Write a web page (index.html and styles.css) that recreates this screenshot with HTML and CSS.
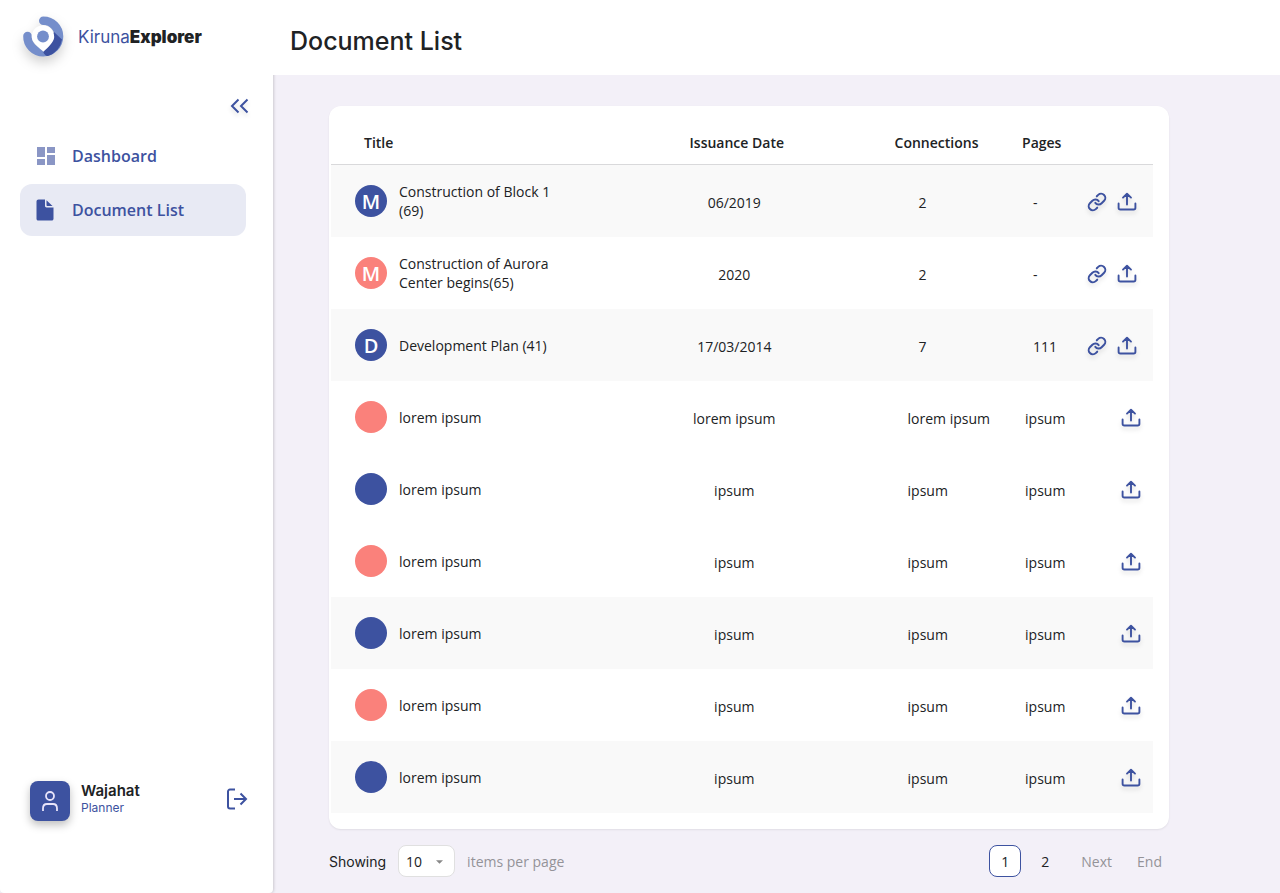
FILE: index.html
```html
<!DOCTYPE html>
<html lang="en">
<head>
<meta charset="utf-8">
<meta name="viewport" content="width=device-width, initial-scale=1">
<title>Document List - KirunaExplorer</title>
<link rel="stylesheet" href="styles.css">
</head>
<body>
<svg class="sprite" aria-hidden="true">
  <symbol id="upload" viewBox="0 0 20 20"><path d="M10 12.500V2M6 5.600 10 1.800l4 3.800M1.600 11.500v4.200c0 1.100.7 1.800 1.800 1.800h13.200c1.100 0 1.800-.7 1.800-1.800v-4.200" fill="none" stroke="currentColor" stroke-width="1.900" stroke-linecap="round" stroke-linejoin="round"/></symbol>
  <symbol id="link" viewBox="0 0 24 24"><path d="M10 13a5 5 0 0 0 7.540.54l3-3a5 5 0 0 0-7.070-7.070l-1.720 1.710M14 11a5 5 0 0 0-7.540-.54l-3 3a5 5 0 0 0 7.070 7.070l1.710-1.710" fill="none" stroke="currentColor" stroke-width="2.400" stroke-linecap="round" stroke-linejoin="round"/></symbol>
</svg>
<div class="app">
  <aside class="sidebar">
    <div class="brand">
      <svg class="brand-mark" viewBox="0 0 40 40" aria-hidden="true">
        <path d="M4.500 19.500a15.800 15.800 0 0 0 15.800 16.200A15.800 15.800 0 0 0 36 20 15.700 15.700 0 0 0 20.300 4.300" fill="none" stroke="#758ecb" stroke-width="8.600" stroke-linecap="round"/>
        <path d="M31 15.500 39 23A20 20 0 0 1 25 39.400Q22 40 20 35Z" fill="#3d52a0"/>
        <path d="M8.700 20.500C8.700 14 13.500 8.800 20 8.800S31.200 14 31.200 20.500C31.200 26 24 31.500 20.500 35.300 16.500 31.500 8.700 26 8.700 20.500Z" fill="#fff"/>
        <circle cx="20" cy="20" r="5.900" fill="#758ecb"/>
      </svg>
      <span class="brand-name">Kiruna<b>Explorer</b></span>
    </div>
    <button class="icon-button collapse" aria-label="Collapse sidebar">
      <svg width="20" height="16" viewBox="0 0 20 16" aria-hidden="true"><path d="M8.500 1.500 2 8l6.500 6.500M17.500 1.500 11 8l6.500 6.500" fill="none" stroke="currentColor" stroke-width="2"/></svg>
    </button>
    <nav class="nav">
      <a class="nav-item" href="#">
        <svg class="nav-icon faded" viewBox="0 0 20 20" aria-hidden="true"><path d="M1 1h8v10H1zM11 1h8v6h-8zM1 13h8v6H1zM11 9h8v10h-8z" fill="currentColor"/></svg>
        Dashboard
      </a>
      <a class="nav-item active" href="#" aria-current="page">
        <svg class="nav-icon" viewBox="0 0 20 22" aria-hidden="true"><path d="M2.500.5H9v6.200c0 1 .6 1.700 1.600 1.700h6.900v11.300c0 1.100-.7 1.800-1.800 1.800H2.300c-1.100 0-1.800-.7-1.800-1.800V2.500c0-1.100.9-2 2-2z" fill="currentColor"/><path d="M10.500 1.300 16.500 7h-5c-.6 0-1-.4-1-1z" fill="currentColor"/></svg>
        Document List
      </a>
    </nav>
    <div class="profile">
      <span class="profile-photo">
        <svg width="20" height="24" viewBox="0 0 20 24" aria-hidden="true"><circle cx="10" cy="7" r="4" fill="none" stroke="currentColor" stroke-width="1.800"/><path d="M3 22v-2.500C3 17 4.500 15 7 15h6c2.500 0 4 2 4 4.500V22" fill="none" stroke="currentColor" stroke-width="1.800"/></svg>
      </span>
      <div class="profile-text"><strong>Wajahat</strong><span>Planner</span></div>
      <button class="icon-button" aria-label="Log out">
        <svg width="22" height="22" viewBox="0 0 22 22" aria-hidden="true"><path d="M9 1.500H4A2 2 0 0 0 2 3.500v15a2 2 0 0 0 2 2h5M8 11h12M14.500 5.500 20 11l-5.500 5.500" fill="none" stroke="currentColor" stroke-width="2"/></svg>
      </button>
    </div>
  </aside>
  <header class="topbar"><h1>Document List</h1></header>
  <main class="content">
    <section class="card">
      <table class="documents">
        <colgroup><col class="col-title"><col class="col-date"><col class="col-connections"><col class="col-pages"><col class="col-actions"></colgroup>
        <thead><tr><th scope="col">Title</th><th scope="col">Issuance Date</th><th scope="col">Connections</th><th scope="col">Pages</th><th scope="col" aria-label="Actions"></th></tr></thead>
        <tbody>
          <tr class="shaded linked"><td><div class="title"><span class="avatar blue">M</span><span>Construction of Block 1 (69)</span></div></td><td>06/2019</td><td>2</td><td>-</td><td><div class="actions"><button class="icon-button" aria-label="Connections"><svg class="link-icon"><use href="#link"/></svg></button><button class="icon-button" aria-label="Upload"><svg class="upload-icon"><use href="#upload"/></svg></button></div></td></tr>
          <tr class="linked"><td><div class="title"><span class="avatar coral">M</span><span>Construction of Aurora Center begins(65)</span></div></td><td>2020</td><td>2</td><td>-</td><td><div class="actions"><button class="icon-button" aria-label="Connections"><svg class="link-icon"><use href="#link"/></svg></button><button class="icon-button" aria-label="Upload"><svg class="upload-icon"><use href="#upload"/></svg></button></div></td></tr>
          <tr class="shaded linked"><td><div class="title"><span class="avatar blue">D</span><span>Development Plan (41)</span></div></td><td>17/03/2014</td><td>7</td><td>111</td><td><div class="actions"><button class="icon-button" aria-label="Connections"><svg class="link-icon"><use href="#link"/></svg></button><button class="icon-button" aria-label="Upload"><svg class="upload-icon"><use href="#upload"/></svg></button></div></td></tr>
          <tr><td><div class="title"><span class="avatar coral"></span><span>lorem ipsum</span></div></td><td>lorem ipsum</td><td>lorem ipsum</td><td>ipsum</td><td><div class="actions"><button class="icon-button" aria-label="Upload"><svg class="upload-icon"><use href="#upload"/></svg></button></div></td></tr>
          <tr><td><div class="title"><span class="avatar blue"></span><span>lorem ipsum</span></div></td><td>ipsum</td><td>ipsum</td><td>ipsum</td><td><div class="actions"><button class="icon-button" aria-label="Upload"><svg class="upload-icon"><use href="#upload"/></svg></button></div></td></tr>
          <tr><td><div class="title"><span class="avatar coral"></span><span>lorem ipsum</span></div></td><td>ipsum</td><td>ipsum</td><td>ipsum</td><td><div class="actions"><button class="icon-button" aria-label="Upload"><svg class="upload-icon"><use href="#upload"/></svg></button></div></td></tr>
          <tr class="shaded"><td><div class="title"><span class="avatar blue"></span><span>lorem ipsum</span></div></td><td>ipsum</td><td>ipsum</td><td>ipsum</td><td><div class="actions"><button class="icon-button" aria-label="Upload"><svg class="upload-icon"><use href="#upload"/></svg></button></div></td></tr>
          <tr><td><div class="title"><span class="avatar coral"></span><span>lorem ipsum</span></div></td><td>ipsum</td><td>ipsum</td><td>ipsum</td><td><div class="actions"><button class="icon-button" aria-label="Upload"><svg class="upload-icon"><use href="#upload"/></svg></button></div></td></tr>
          <tr class="shaded"><td><div class="title"><span class="avatar blue"></span><span>lorem ipsum</span></div></td><td>ipsum</td><td>ipsum</td><td>ipsum</td><td><div class="actions"><button class="icon-button" aria-label="Upload"><svg class="upload-icon"><use href="#upload"/></svg></button></div></td></tr>
        </tbody>
      </table>
    </section>
    <footer class="table-footer">
      <div class="page-size">
        <label for="page-size">Showing</label>
        <span class="select-box">
          <select id="page-size"><option>10</option><option>20</option><option>50</option></select>
          <svg class="select-arrow" viewBox="0 0 8 4" aria-hidden="true"><path d="M0 0h8L4 4z" fill="#888"/></svg>
        </span>
        <span class="muted">items per page</span>
      </div>
      <nav class="pagination" aria-label="Pages">
        <button class="page current" aria-current="page">1</button>
        <button class="page">2</button>
        <span class="page-steps">
          <button class="page-step">Next</button>
          <button class="page-step">End</button>
        </span>
      </nav>
    </footer>
  </main>
</div>
</body>
</html>
```
FILE: styles.css
```css
* { box-sizing: border-box; }

body {
  margin: 0;
  background: #fff;
  color: #202224;
  font: 14px/19px "Open Sans", "Noto Sans", sans-serif;
}

button, select { font: inherit; color: inherit; }
.sprite { position: absolute; width: 0; height: 0; }

.app {
  display: grid;
  grid-template: 75px 1fr / 273px 1fr;
  min-height: 100vh;
  background: linear-gradient(#fff 75px, #f3f0f8 75px);
}

.icon-button {
  display: inline-flex;
  padding: 0;
  border: 0;
  background: none;
  color: #3d52a0;
  cursor: pointer;
}
.icon-button svg { filter: drop-shadow(0 3px 2px rgba(0, 0, 0, 0.12)); }

/* Sidebar */
.sidebar {
  grid-row: 1 / 3;
  display: flex;
  flex-direction: column;
  padding: 16px 0 72px;
  background: #fff;
  border-radius: 0 0 4px 4px;
  box-shadow: 1px 0 3px rgba(0, 0, 0, 0.16);
}
.brand {
  display: flex;
  align-items: center;
  gap: 15px;
  padding-left: 23px;
}
.brand-mark {
  width: 40px;
  height: 41px;
  overflow: visible;
  filter: drop-shadow(0 6px 6px rgba(0, 0, 0, 0.18));
}
.brand-name {
  font: 17px/20px Inter, sans-serif;
  color: #3d52a0;
}
.brand-name b { font-weight: 900; color: #202224; }
.collapse { align-self: flex-end; margin: 41px 23px 16px 0; }

.nav {
  display: flex;
  flex-direction: column;
  gap: 2px;
  padding: 0 27px 0 20px;
}
.nav-item {
  display: flex;
  align-items: center;
  gap: 16px;
  height: 52px;
  padding-left: 16px;
  border-radius: 12px;
  color: #3d52a0;
  font-size: 16px;
  font-weight: 600;
  text-decoration: none;
}
.nav-item.active { background: #e8eaf4; }
.nav-icon { width: 20px; height: 22px; }
.faded { opacity: 0.6; }

.profile {
  display: flex;
  align-items: center;
  gap: 11px;
  margin-top: auto;
  padding: 0 25px 0 30px;
}
.profile-photo {
  display: grid;
  place-items: center;
  width: 40px;
  height: 40px;
  border-radius: 8px;
  background: #3d52a0;
  color: #e8e4fa;
  box-shadow: 0 4px 8px rgba(0, 0, 0, 0.25);
}
.profile-text {
  display: flex;
  flex: 1;
  flex-direction: column;
  padding-bottom: 4px;
  font: 12px/16px Inter, sans-serif;
  color: #3d52a0;
}
.profile-text strong { font-size: 15px; font-weight: 600; line-height: 18px; color: #202224; }
.profile .icon-button { padding-bottom: 4px; }
.profile .icon-button svg { filter: none; }

/* Header */
.topbar {
  display: flex;
  align-items: center;
  padding: 6px 17px 0;
  background: #fff;
}
.topbar h1 { margin: 0; font: 500 25px/36px Inter, sans-serif; }

/* Documents */
.content { padding: 31px 111px 16px 56px; }
.card {
  padding: 16px 16px 16px 2px;
  border-radius: 12px;
  background: #fff;
  box-shadow: 0 1px 2px rgba(0, 0, 0, 0.08);
}
.documents {
  width: 100%;
  table-layout: fixed;
  border-spacing: 0;
}
.col-title { width: 36.5%; }
.col-date { width: 25%; }
.col-connections { width: 20.5%; }
.col-pages { width: 9%; }
.col-actions { width: 9%; }

th {
  height: 43px;
  padding: 0 0 2px;
  border-bottom: 1px solid #d9d9db;
  font-weight: 600;
  text-align: left;
}
th:nth-child(1) { padding-left: 33px; }
th:nth-child(2) { padding-left: 6px; text-align: center; }
th:nth-child(3) { padding-left: 58px; }
th:nth-child(4) { padding-left: 17px; }

td { height: 72px; padding: 2px 0 0; }
td:nth-child(1) { padding: 0 0 0 24px; }
td:nth-child(2) { padding-left: 1px; text-align: center; }
td:nth-child(3) { padding-left: 71px; }
td:nth-child(4) { padding-left: 20px; }
.linked td:nth-child(3) { padding-left: 82px; }
.linked td:nth-child(4) { padding-left: 28px; }
.shaded { background: #f9f9f9; }

.title {
  display: flex;
  align-items: center;
  gap: 12px;
  max-width: 208px;
}
.avatar {
  display: grid;
  flex: none;
  place-items: center;
  width: 32px;
  height: 32px;
  border-radius: 50%;
  color: #fff;
  font-size: 20px;
  font-weight: 600;
}
.blue { background: #3d52a0; }
.coral { background: #fa817b; }

.actions {
  display: flex;
  align-items: center;
  justify-content: flex-end;
  gap: 10px;
  padding-right: 12px;
}
.linked .actions { padding-right: 16px; }
.link-icon, .upload-icon { width: 20px; height: 20px; }

/* Footer */
.table-footer {
  display: flex;
  justify-content: space-between;
  padding-top: 16px;
}
.page-size, .pagination { display: flex; align-items: center; }
.page-size { gap: 12px; }
.page-size label { font-family: Inter, sans-serif; }
.select-box { position: relative; }
.select-box select {
  display: block;
  width: 57px;
  height: 32px;
  padding: 0 7px;
  border: 1px solid #e0e0e0;
  border-radius: 8px;
  background: #fff;
  appearance: none;
}
.select-arrow {
  position: absolute;
  top: 15px;
  right: 12px;
  width: 7px;
  height: 4px;
  pointer-events: none;
}
.muted, .page-step { color: #949398; }

.pagination { gap: 8px; padding-right: 7px; }
.page, .page-step {
  height: 32px;
  padding: 0;
  border: 0;
  background: none;
  cursor: pointer;
}
.page { width: 32px; border-radius: 8px; }
.page.current { border: 1px solid #3d52a0; background: #fff; }
.page-steps { display: flex; gap: 25px; padding-left: 12px; }
```
